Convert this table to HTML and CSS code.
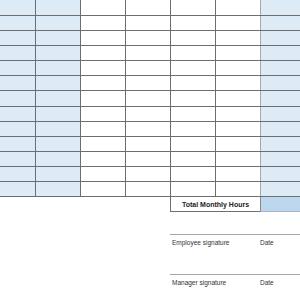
FILE: index.html
```html
<!DOCTYPE html>
<html>
<head>
<meta charset="utf-8">
<link rel="stylesheet" href="styles.css">
</head>
<body>
<div class="sheet">
  <div class="grid">
    <div class="c b"></div><div class="c b"></div><div class="c"></div><div class="c"></div><div class="c"></div><div class="c"></div><div class="c r"></div>
    <div class="c b"></div><div class="c b"></div><div class="c"></div><div class="c"></div><div class="c"></div><div class="c"></div><div class="c r"></div>
    <div class="c b"></div><div class="c b"></div><div class="c"></div><div class="c"></div><div class="c"></div><div class="c"></div><div class="c r"></div>
    <div class="c b"></div><div class="c b"></div><div class="c"></div><div class="c"></div><div class="c"></div><div class="c"></div><div class="c r"></div>
    <div class="c b"></div><div class="c b"></div><div class="c"></div><div class="c"></div><div class="c"></div><div class="c"></div><div class="c r"></div>
    <div class="c b"></div><div class="c b"></div><div class="c"></div><div class="c"></div><div class="c"></div><div class="c"></div><div class="c r"></div>
    <div class="c b"></div><div class="c b"></div><div class="c"></div><div class="c"></div><div class="c"></div><div class="c"></div><div class="c r"></div>
    <div class="c b"></div><div class="c b"></div><div class="c"></div><div class="c"></div><div class="c"></div><div class="c"></div><div class="c r"></div>
    <div class="c b"></div><div class="c b"></div><div class="c"></div><div class="c"></div><div class="c"></div><div class="c"></div><div class="c r"></div>
    <div class="c b"></div><div class="c b"></div><div class="c"></div><div class="c"></div><div class="c"></div><div class="c"></div><div class="c r"></div>
    <div class="c b"></div><div class="c b"></div><div class="c"></div><div class="c"></div><div class="c"></div><div class="c"></div><div class="c r"></div>
    <div class="c b"></div><div class="c b"></div><div class="c"></div><div class="c"></div><div class="c"></div><div class="c"></div><div class="c r"></div>
    <div class="c b"></div><div class="c b"></div><div class="c"></div><div class="c"></div><div class="c"></div><div class="c"></div><div class="c r"></div>
  </div>
  <div class="total">
    <div class="total-label">Total Monthly Hours</div>
    <div class="total-value"></div>
  </div>
  <div class="sig">
    <div class="sig-block">
      <span class="sig-name">Employee signature</span><span class="sig-date">Date</span>
    </div>
    <div class="sig-block">
      <span class="sig-name">Manager signature</span><span class="sig-date">Date</span>
    </div>
  </div>
</div>
</body>
</html>
```

FILE: styles.css
```css
html, body {
  margin: 0;
  padding: 0;
  background: #ffffff;
}

.sheet {
  width: 300px;
  height: 300px;
  overflow: hidden;
  font-family: "Liberation Sans", Arial, sans-serif;
}

.grid {
  display: grid;
  grid-template-columns: 35px 44px 44px 44px 44px 44px 39px;
  grid-template-rows: 15px repeat(12, 14.1px);
  gap: 1px;
  background: #6e6e6e;
  padding-bottom: 1px;
}

.c {
  background: #ffffff;
}

.c.b {
  background: #ddebf7;
}

.c.r {
  background: #ddebf7;
  box-shadow: -1px 0 0 #a7a9ab;
}

.total {
  display: flex;
  padding-left: 170px;
  height: 15px;
}

.total-label {
  width: 89px;
  height: 14px;
  border-left: 1px solid #6e6e6e;
  border-bottom: 1px solid #6e6e6e;
  font-size: 7px;
  font-weight: bold;
  color: #222222;
  display: flex;
  align-items: center;
  justify-content: center;
}

.total-value {
  width: 39px;
  height: 14px;
  border-left: 1px solid #8a8a8a;
  border-bottom: 1px solid #a7b6c4;
  background: #bdd7ee;
}

.sig {
  padding-left: 170px;
  margin-top: 22px;
}

.sig-block {
  border-top: 1px solid #a6a6a6;
  height: 35px;
  padding-top: 4px;
  padding-left: 2px;
  display: flex;
  font-size: 6.5px;
  line-height: 8px;
  color: #333333;
}

.sig-name {
  width: 88px;
}
```
